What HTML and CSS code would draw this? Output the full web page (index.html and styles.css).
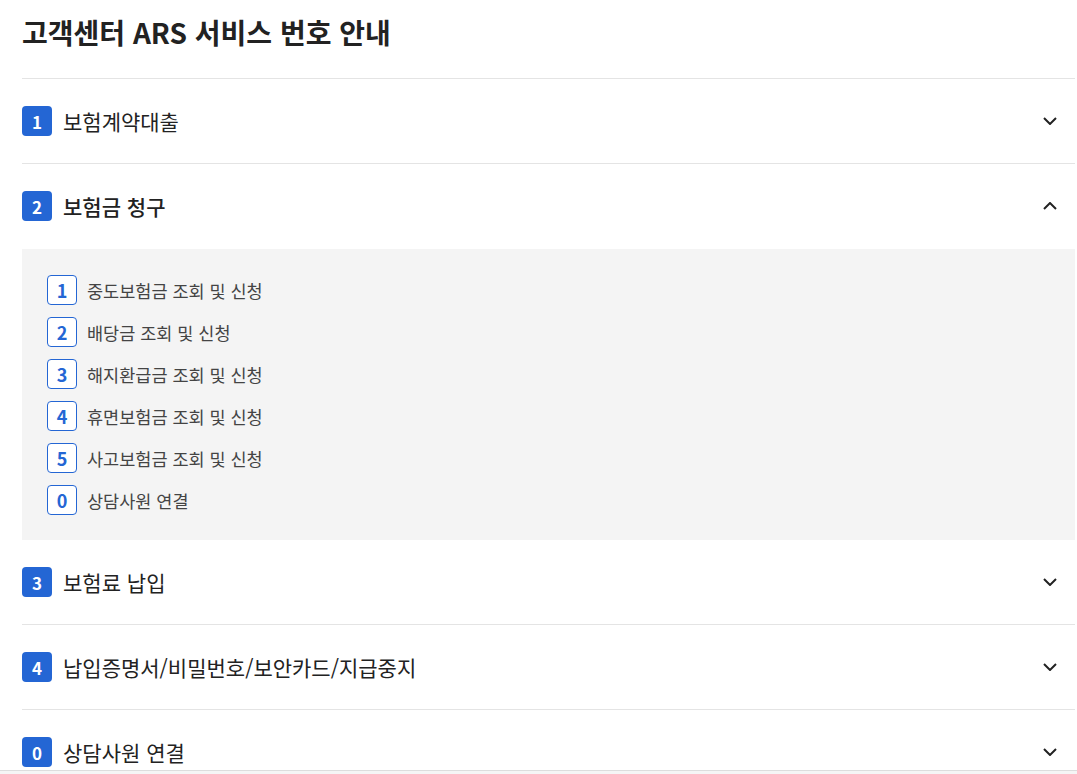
FILE: index.html
```html
<!DOCTYPE html>
<html lang="ko">
<head>
<meta charset="utf-8">
<title>고객센터 ARS 서비스 번호 안내</title>
<link rel="stylesheet" href="styles.css">
</head>
<body>
<main class="page">
  <h1 class="title">고객센터 ARS 서비스 번호 안내</h1>
  <ul class="accordion">
    <li class="item">
      <div class="head"><span class="badge">1</span><span class="label">보험계약대출</span>
        <svg class="chev" viewBox="0 0 14 8" width="14" height="8"><path d="M1 1l6 6 6-6" fill="none" stroke="#222" stroke-width="2"/></svg></div>
    </li>
    <li class="item open">
      <div class="head"><span class="badge">2</span><span class="label strong">보험금 청구</span>
        <svg class="chev" viewBox="0 0 14 8" width="14" height="8"><path d="M1 7l6-6 6 6" fill="none" stroke="#222" stroke-width="2"/></svg></div>
      <ol class="panel">
        <li class="sub"><span class="sbadge">1</span><span class="stext">중도보험금 조회 및 신청</span></li>
        <li class="sub"><span class="sbadge">2</span><span class="stext">배당금 조회 및 신청</span></li>
        <li class="sub"><span class="sbadge">3</span><span class="stext">해지환급금 조회 및 신청</span></li>
        <li class="sub"><span class="sbadge">4</span><span class="stext">휴면보험금 조회 및 신청</span></li>
        <li class="sub"><span class="sbadge">5</span><span class="stext">사고보험금 조회 및 신청</span></li>
        <li class="sub"><span class="sbadge">0</span><span class="stext">상담사원 연결</span></li>
      </ol>
    </li>
    <li class="item">
      <div class="head"><span class="badge">3</span><span class="label">보험료 납입</span>
        <svg class="chev" viewBox="0 0 14 8" width="14" height="8"><path d="M1 1l6 6 6-6" fill="none" stroke="#222" stroke-width="2"/></svg></div>
    </li>
    <li class="item">
      <div class="head"><span class="badge">4</span><span class="label">납입증명서/비밀번호/보안카드/지급중지</span>
        <svg class="chev" viewBox="0 0 14 8" width="14" height="8"><path d="M1 1l6 6 6-6" fill="none" stroke="#222" stroke-width="2"/></svg></div>
    </li>
    <li class="item">
      <div class="head"><span class="badge">0</span><span class="label">상담사원 연결</span>
        <svg class="chev" viewBox="0 0 14 8" width="14" height="8"><path d="M1 1l6 6 6-6" fill="none" stroke="#222" stroke-width="2"/></svg></div>
    </li>
  </ul>
</main>
<div class="bottombar"></div>
</body>
</html>
```
FILE: styles.css
```css
* { box-sizing: border-box; }
html, body { margin: 0; padding: 0; background: #fff; }
body {
  font-family: "Noto Sans CJK KR", "Noto Sans", sans-serif;
  color: #222;
  overflow: hidden;
}
.page { padding: 0 2px 0 22px; }
.title {
  margin: 0;
  padding-top: 12px;
  height: 78px;
  font-size: 28px;
  font-weight: 700;
  line-height: 40px;
  letter-spacing: 0;
  color: #222;
}
.accordion { list-style: none; margin: 0; padding: 0; border-top: 1px solid #e4e4e4; }
.item { border-bottom: 1px solid #e4e4e4; }
.item.open { border-bottom: none; }
.head {
  display: flex;
  align-items: center;
  height: 84px;
  padding-right: 18px;
}
.badge {
  width: 30px; height: 30px;
  flex: none;
  border-radius: 4px;
  background: #2466d4;
  color: #fff;
  font-weight: 700;
  font-size: 17px;
  display: flex; align-items: center; justify-content: center;
  line-height: 1;
}
.label {
  margin-left: 11px;
  font-size: 21px;
  letter-spacing: 0;
  flex: 1;
  color: #222;
}
.label.strong { font-weight: 500; }
.chev { flex: none; }
.panel {
  list-style: none;
  margin: 1px 0 0;
  padding: 26px 25px 25px;
  background: #f4f4f4;
  display: flex;
  flex-direction: column;
  gap: 12px;
}
.sub { display: flex; align-items: center; }
.sbadge {
  width: 30px; height: 30px; flex: none;
  border: 1px solid #2466d4;
  border-radius: 4px;
  background: #fff;
  color: #2466d4;
  font-weight: 700;
  font-size: 18px;
  display: flex; align-items: center; justify-content: center;
  line-height: 1;
}
.stext { margin-left: 10px; font-size: 17.5px; color: #444; letter-spacing: 0; }
.bottombar {
  position: fixed;
  left: 0; right: 0; bottom: 0;
  height: 4px;
  background: #f5f5f5;
  border-top: 1px solid #ddd;
}
```
